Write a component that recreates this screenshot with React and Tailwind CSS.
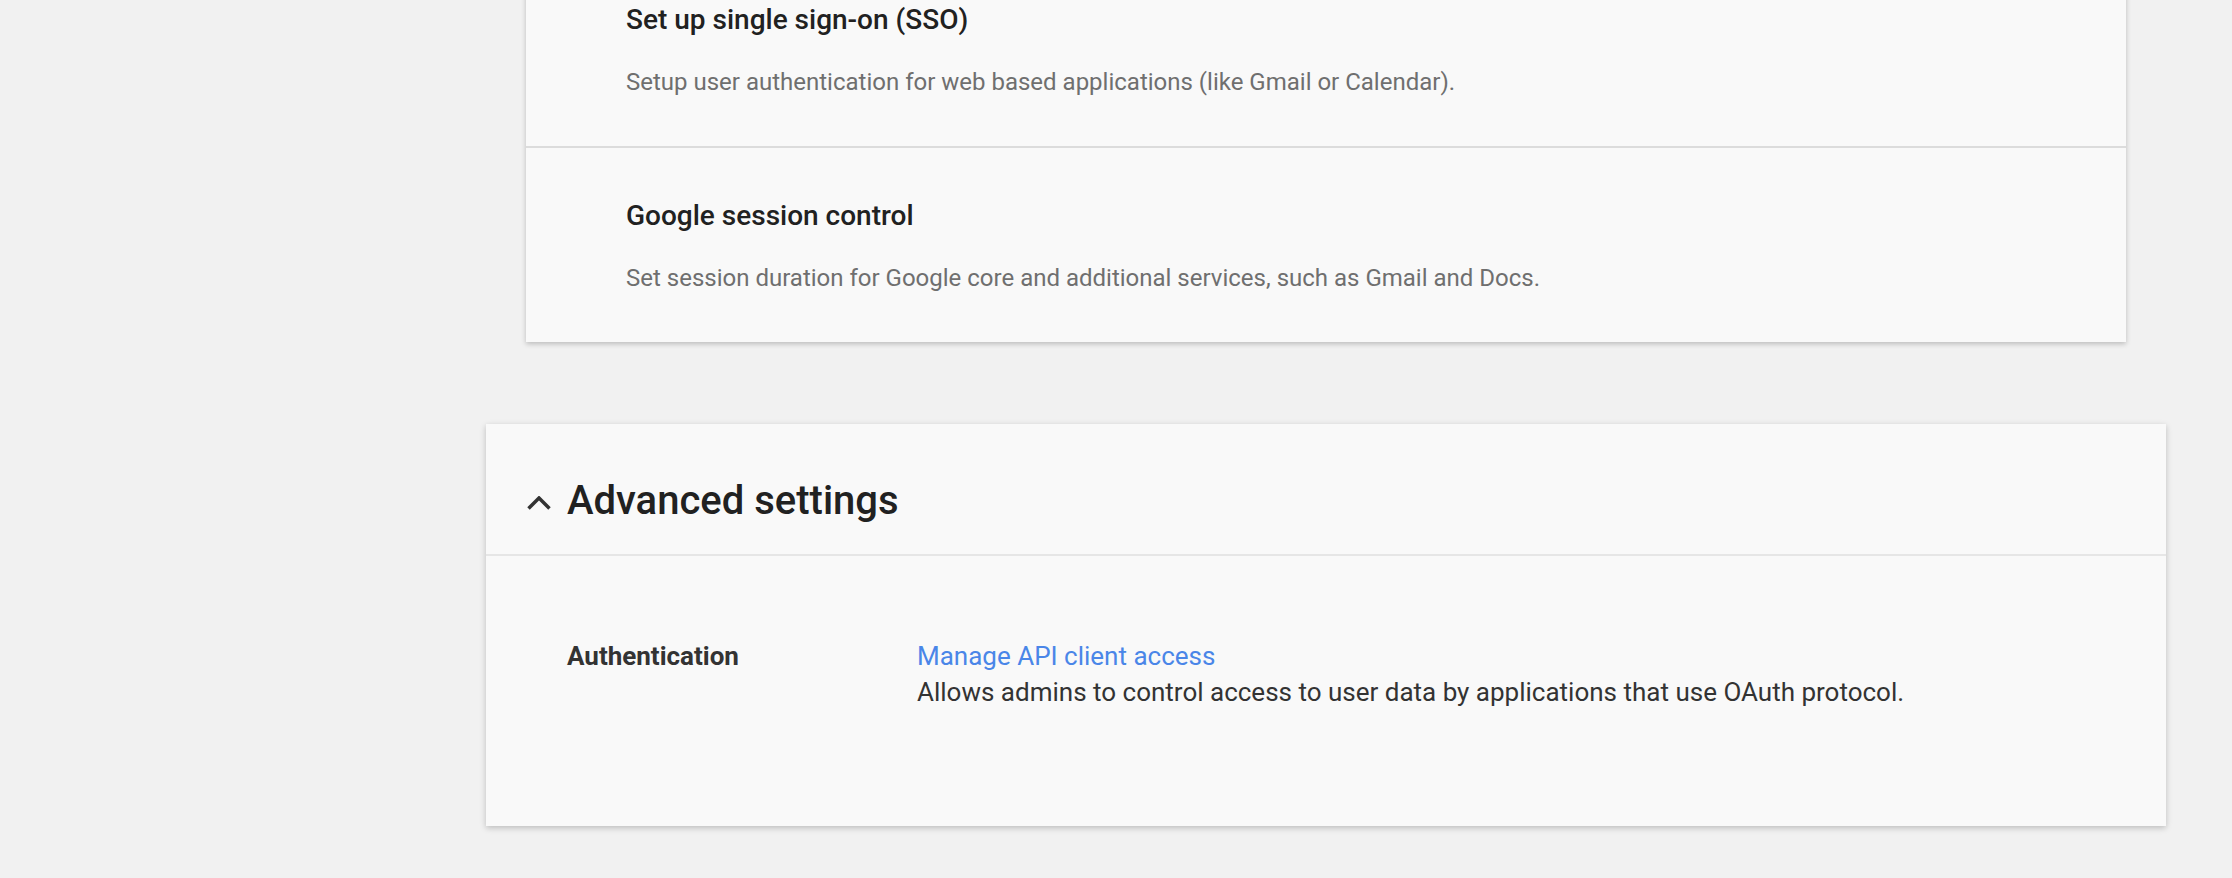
import React from 'react';

const sections = [
  {
    title: 'Set up single sign-on (SSO)',
    text: 'Setup user authentication for web based applications (like Gmail or Calendar).',
  },
  {
    title: 'Google session control',
    text: 'Set session duration for Google core and additional services, such as Gmail and Docs.',
  },
];

function SettingRow({ title, text, last }) {
  return (
    <div className={`pl-[100px] pt-[50px] pb-[48px] ${last ? '' : 'border-b-2 border-[#dcdcdc]'}`}>
      <div className="text-[28px] leading-[36px] font-medium text-[#212121]">{title}</div>
      <div className="mt-[28px] text-[24px] leading-[32px] text-[#6f6f6f]">{text}</div>
    </div>
  );
}

export default function App() {
  return (
    <div
      className="h-[878px] w-full overflow-hidden bg-[#f1f1f1] flex"
      style={{ fontFamily: 'Roboto, "Noto Sans", sans-serif' }}
    >
      <div className="w-[420px] shrink-0" />

      <main className="flex-1 px-[66px]">
        {/* security settings list, scrolled so its top is out of view */}
        <div className="mx-[40px] -mt-[48px] bg-[#f9f9f9] shadow-[0_2px_5px_rgba(0,0,0,0.22)]">
          {sections.map((s, i) => (
            <SettingRow key={s.title} {...s} last={i === sections.length - 1} />
          ))}
        </div>

        <section className="mt-[82px] bg-[#f9f9f9] shadow-[0_2px_6px_rgba(0,0,0,0.22)]">
          <div className="flex items-center pl-[41px] pt-[51px] pb-[27px] border-b-2 border-[#e6e6e6]">
            <svg width="24" height="14" viewBox="0 0 24 14" className="mt-[4px] shrink-0">
              <polyline points="1.5,12.5 12,2 22.5,12.5" fill="none" stroke="#333" strokeWidth="3.5" />
            </svg>
            <h2 className="ml-[16px] text-[40px] leading-[52px] font-medium text-[#212121]">
              Advanced settings
            </h2>
          </div>

          <div className="flex pl-[81px] pt-[82px] pb-[116px]">
            <div className="w-[350px] shrink-0 text-[26px] leading-[36px] font-bold text-[#333]">
              Authentication
            </div>
            <div className="text-[26px] leading-[36px]">
              <a href="#" className="block text-[#4a86e8]">Manage API client access</a>
              <p className="text-[#333]">
                Allows admins to control access to user data by applications that use OAuth protocol.
              </p>
            </div>
          </div>
        </section>
      </main>
    </div>
  );
}
